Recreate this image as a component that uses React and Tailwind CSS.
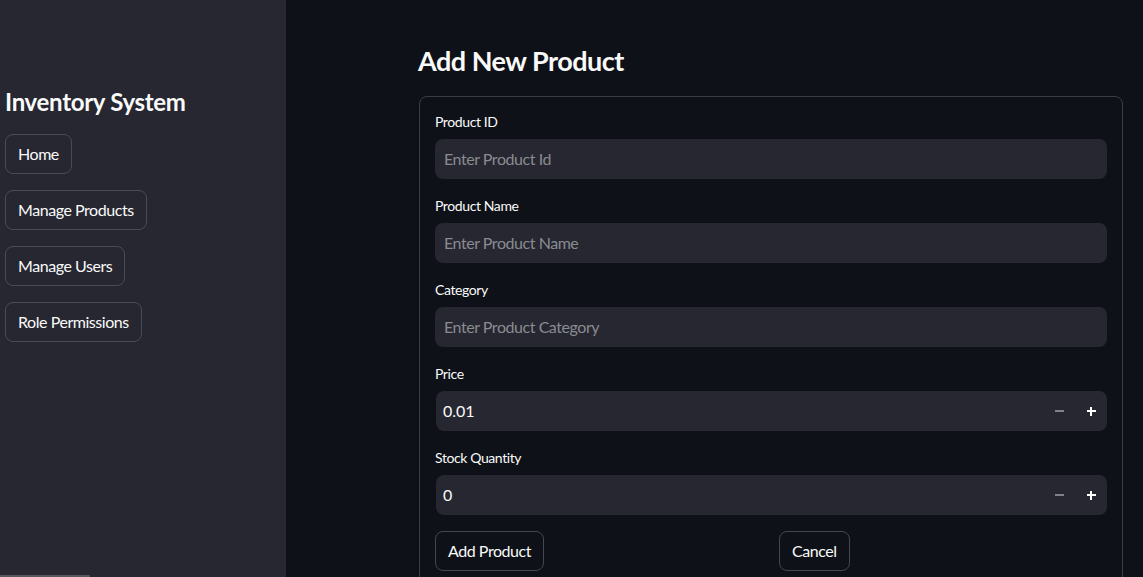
import React from "react";

function SideButton({ children }) {
  return (
    <button className="h-[40px] px-[12px] rounded-[8px] border border-[#4a4b53] bg-[#262730] text-[#fafafa] text-[16px] leading-none self-start tracking-[-0.45px] pb-[1px]">
      {children}
    </button>
  );
}

function TextField({ label, placeholder }) {
  return (
    <div className="flex flex-col">
      <div className="h-[27px] text-[14px] leading-[19px] text-[#fafafa] tracking-[-0.4px]">{label}</div>
      <div className="h-[40px] rounded-[8px] bg-[#262730] flex items-center px-[9px] text-[16px] text-[#8a8b92] tracking-[-0.45px]">
        {placeholder}
      </div>
    </div>
  );
}

function NumberField({ label, value }) {
  return (
    <div className="flex flex-col">
      <div className="h-[27px] text-[14px] leading-[19px] text-[#fafafa] tracking-[-0.4px]">{label}</div>
      <div className="h-[40px] ml-[1px] rounded-[8px] bg-[#262730] flex items-center text-[16px] text-[#fafafa]">
        <div className="flex-1 pl-[7px]">{value}</div>
        <div className="w-[32px] h-full flex items-center justify-center">
          <div className="w-[9px] h-[2px] bg-[#80828b]" />
        </div>
        <div className="w-[32px] h-full flex items-center justify-center relative">
          <div className="w-[9px] h-[2px] bg-white" />
          <div className="absolute w-[2px] h-[9px] bg-white" />
        </div>
      </div>
    </div>
  );
}

export default function App() {
  return (
    <div
      className="w-[1143px] h-[577px] flex overflow-hidden bg-[#0e1117] text-[#fafafa]"
      style={{ fontFamily: "Lato, 'Noto Sans', sans-serif" }}
    >
      <aside className="w-[286px] shrink-0 bg-[#262730] flex flex-col px-[5px] pt-[87px] relative">
        <h1 className="text-[24px] font-bold leading-[30px] mb-[17px] tracking-[-0.3px]">Inventory System</h1>
        <div className="flex flex-col gap-[16px]">
          <SideButton>Home</SideButton>
          <SideButton>Manage Products</SideButton>
          <SideButton>Manage Users</SideButton>
          <SideButton>Role Permissions</SideButton>
        </div>
        <div className="absolute left-0 bottom-0 w-[90px] h-[2px] bg-[#55565e]" />
      </aside>
      <main className="flex-1 pl-[132px] pr-[20px] pt-[44px]">
        <h2 className="text-[27px] font-bold leading-[34px] mb-[18px] tracking-[-0.5px]">Add New Product</h2>
        <div className="ml-[1px] border border-[#3b3d44] rounded-[8px] p-[15px] pr-[15px] flex flex-col gap-[17px]">
          <TextField label="Product ID" placeholder="Enter Product Id" />
          <TextField label="Product Name" placeholder="Enter Product Name" />
          <TextField label="Category" placeholder="Enter Product Category" />
          <NumberField label="Price" value="0.01" />
          <NumberField label="Stock Quantity" value="0" />
          <div className="grid grid-cols-2 gap-[16px] -mt-[1px]">
            <button className="justify-self-start h-[40px] px-[12px] rounded-[8px] border border-[#45474e] bg-[#0e1117] text-[16px] tracking-[-0.45px] pb-[1px]">
              Add Product
            </button>
            <button className="justify-self-start h-[40px] px-[12px] rounded-[8px] border border-[#45474e] bg-[#0e1117] text-[16px] tracking-[-0.45px] pb-[1px]">
              Cancel
            </button>
          </div>
        </div>
      </main>
    </div>
  );
}
